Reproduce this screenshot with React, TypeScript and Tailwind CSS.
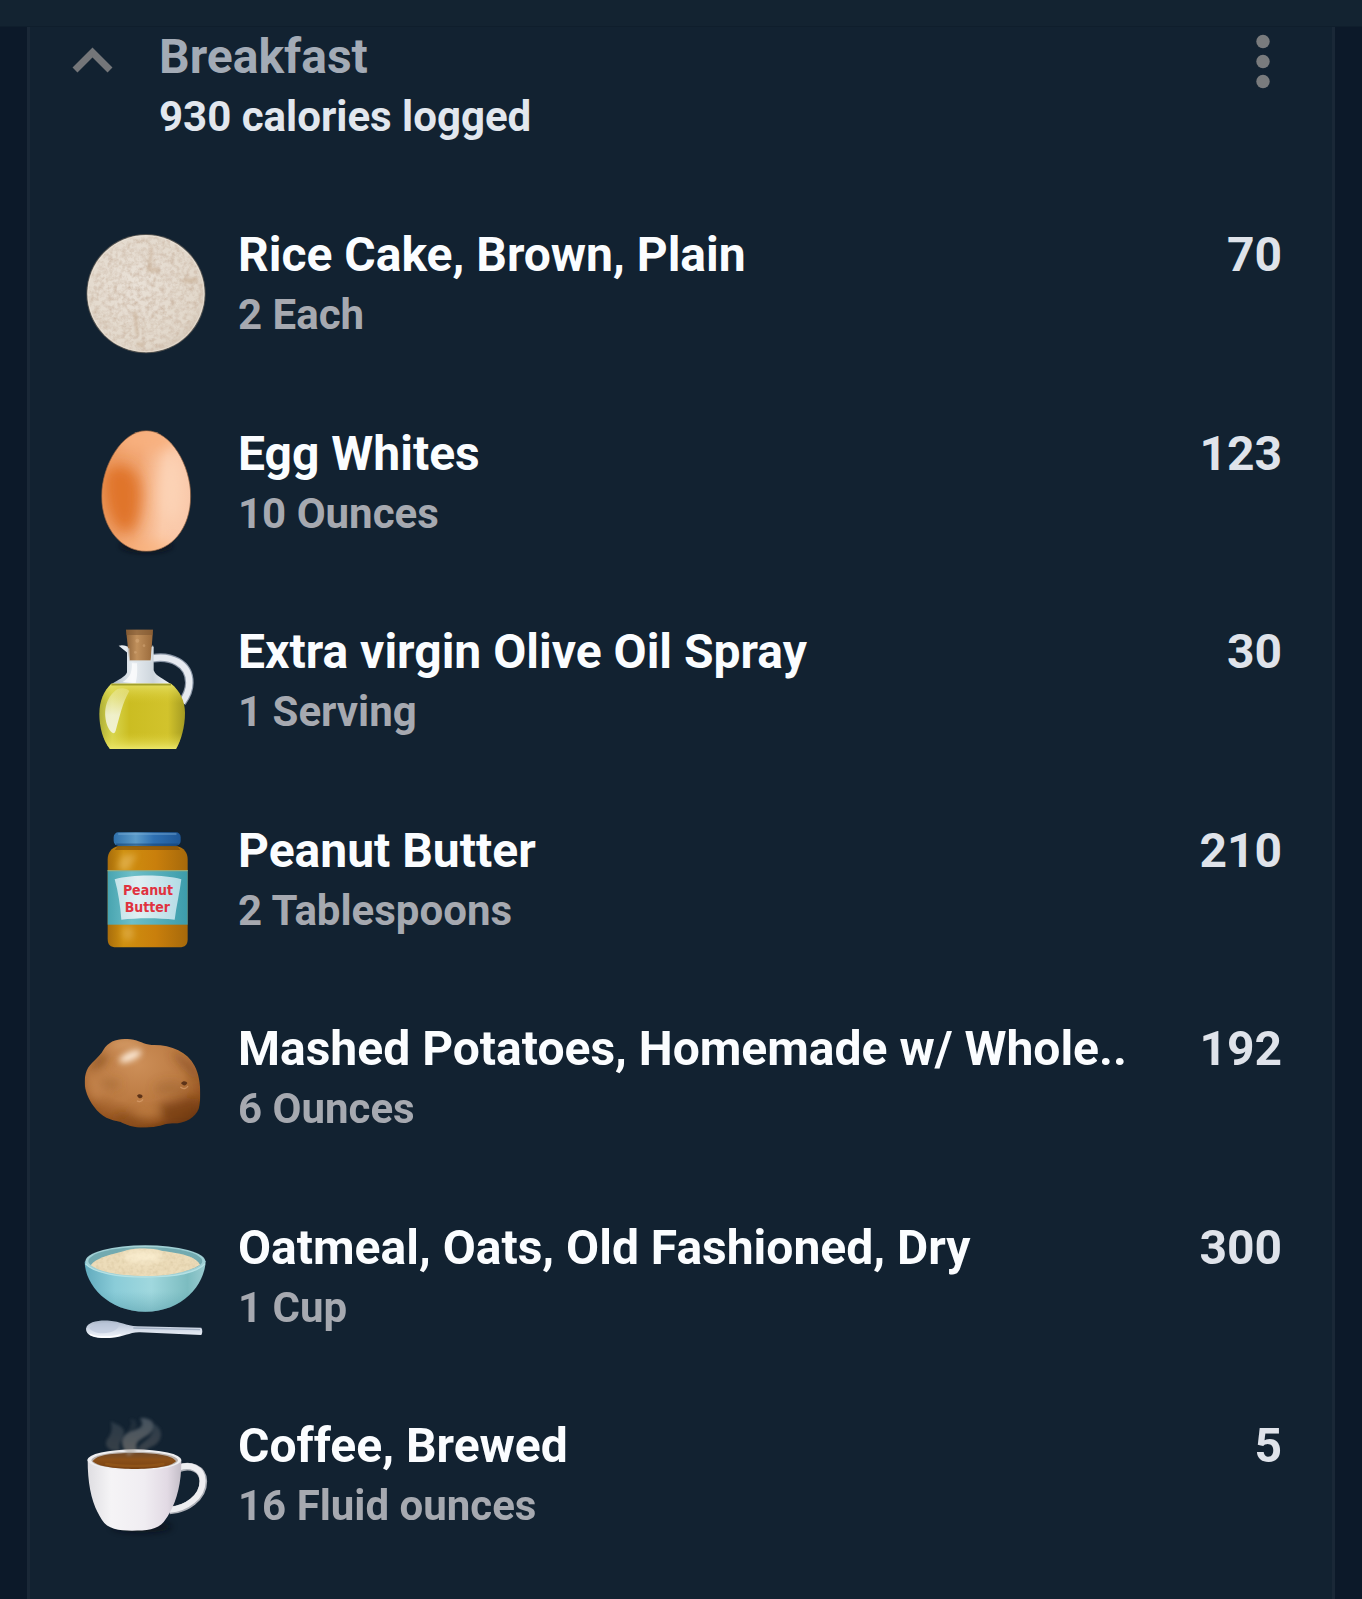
import { useState } from 'react'
import type { ReactNode } from 'react'

type Food = {
  name: string
  serving: string
  calories: number
  icon: ReactNode
}

function RiceCakeIcon() {
  return (
    <svg viewBox="0 -33 450 450" className="size-[150px] shrink-0" aria-hidden="true">
      <defs>
        <filter id="rice-grain" x="0" y="0" width="1" height="1">
          <feTurbulence type="fractalNoise" baseFrequency="0.07" numOctaves="4" seed="4" result="noise" />
          <feColorMatrix
            in="noise"
            type="matrix"
            values="0 0 0 0 0.62  0 0 0 0 0.5  0 0 0 0 0.4  1.6 1.2 0 0 -1.15"
            result="grain"
          />
          <feComposite in="grain" in2="SourceGraphic" operator="in" result="speckle" />
          <feMerge>
            <feMergeNode in="SourceGraphic" />
            <feMergeNode in="speckle" />
          </feMerge>
        </filter>
        <radialGradient id="rice-base" cx="0.4" cy="0.4" r="0.65">
          <stop offset="0" stopColor="#e9e1d7" />
          <stop offset="0.85" stopColor="#e2d8cb" />
          <stop offset="1" stopColor="#d6cabb" />
        </radialGradient>
        <filter id="rice-soft" x="-1" y="-1" width="3" height="3">
          <feGaussianBlur stdDeviation="5" />
        </filter>
      </defs>
      <circle cx="228" cy="221" r="179" fill="#6b655d" opacity="0.7" />
      <circle cx="228" cy="221" r="176" fill="url(#rice-base)" filter="url(#rice-grain)" />
      <circle cx="228" cy="221" r="174" fill="none" stroke="#efe9e0" strokeWidth="3" opacity="0.5" />
      <g fill="none" stroke="#bd9f80" strokeLinecap="round" opacity="0.5" filter="url(#rice-soft)">
        <path d="M245 80l-6 60" strokeWidth="7" />
        <path d="M235 148l25 2M345 182l30 -2" strokeWidth="13" />
        <path d="M195 280l6 60M205 370l12 6" strokeWidth="9" />
      </g>
    </svg>
  )
}

function EggIcon() {
  return (
    <svg viewBox="0 -22 450 450" className="size-[150px] shrink-0" aria-hidden="true">
      <defs>
        <linearGradient id="egg-base" x1="0" x2="1" y1="0.4" y2="0.5">
          <stop offset="0" stopColor="#ec9a60" />
          <stop offset="0.4" stopColor="#f1a673" />
          <stop offset="0.7" stopColor="#fbcaa9" />
          <stop offset="1" stopColor="#f9c8aa" />
        </linearGradient>
        <clipPath id="egg-clip">
          <path d="M229 46C302 46 362 150 362 242C362 340 303 408 229 408C155 408 95 340 95 242C95 150 156 46 229 46Z" />
        </clipPath>
        <filter id="egg-soft" x="-1" y="-1" width="3" height="3">
          <feGaussianBlur stdDeviation="20" />
        </filter>
        <filter id="egg-shadow" x="-1" y="-1" width="3" height="3">
          <feGaussianBlur stdDeviation="7" />
        </filter>
      </defs>
      <ellipse cx="229" cy="392" rx="80" ry="22" fill="#080f18" opacity="0.6" filter="url(#egg-shadow)" />
      <g clipPath="url(#egg-clip)">
        <rect x="90" y="40" width="280" height="375" fill="url(#egg-base)" />
        <ellipse cx="235" cy="70" rx="100" ry="36" fill="#f8b07f" filter="url(#egg-soft)" />
        <path d="M105 170C140 130 205 140 212 225C214 300 196 350 165 352C115 340 90 225 105 170Z" fill="#e0752c" filter="url(#egg-soft)" />
        <ellipse cx="305" cy="220" rx="32" ry="100" fill="#fcd3b6" filter="url(#egg-soft)" />
        <ellipse cx="230" cy="402" rx="90" ry="20" fill="#f9b27d" filter="url(#egg-soft)" />
      </g>
      <path
        d="M229 46C302 46 362 150 362 242C362 340 303 408 229 408C155 408 95 340 95 242C95 150 156 46 229 46Z"
        fill="none"
        stroke="#8c5e3e"
        strokeWidth="3"
        opacity="0.7"
      />
    </svg>
  )
}

function OilIcon() {
  return (
    <svg viewBox="0 -27 450 450" className="size-[150px] shrink-0" aria-hidden="true">
      <defs>
        <linearGradient id="oil-glass" x1="0" x2="1">
          <stop offset="0" stopColor="#aab8c4" />
          <stop offset="0.35" stopColor="#e9eef2" />
          <stop offset="0.7" stopColor="#cdd5dc" />
          <stop offset="1" stopColor="#f2f5f7" />
        </linearGradient>
        <linearGradient id="oil-liquid" x1="0" x2="1">
          <stop offset="0" stopColor="#aeae35" />
          <stop offset="0.15" stopColor="#d8d64f" />
          <stop offset="0.35" stopColor="#cbbd22" />
          <stop offset="0.8" stopColor="#d2c32c" />
          <stop offset="1" stopColor="#a49b22" />
        </linearGradient>
        <linearGradient id="oil-depth" x1="0" x2="0" y1="0" y2="1">
          <stop offset="0" stopColor="#e9e670" stopOpacity="0.8" />
          <stop offset="0.3" stopColor="#d9cc34" stopOpacity="0" />
          <stop offset="0.75" stopColor="#d9cc34" stopOpacity="0" />
          <stop offset="1" stopColor="#ece86c" stopOpacity="0.95" />
        </linearGradient>
        <linearGradient id="oil-cork" x1="0" x2="1">
          <stop offset="0" stopColor="#8d6238" />
          <stop offset="0.4" stopColor="#c0905c" />
          <stop offset="1" stopColor="#99693a" />
        </linearGradient>
        <linearGradient id="oil-shine" x1="0" x2="0" y1="0" y2="1">
          <stop offset="0" stopColor="#f4f3c4" stopOpacity="0.3" />
          <stop offset="0.6" stopColor="#f4f5e0" stopOpacity="0.85" />
          <stop offset="1" stopColor="#f4f5e0" stopOpacity="0.9" />
        </linearGradient>
      </defs>
      <path d="M248 130C300 121 358 143 358 203C358 228 350 243 336 262" fill="none" stroke="#8995a5" strokeWidth="26" />
      <path d="M248 130C300 121 358 143 358 203C358 228 350 243 336 262" fill="none" stroke="#e6eaf0" strokeWidth="19" />
      <path d="M146 92C158 88 170 92 180 99L180 120C172 112 156 101 146 92Z" fill="#e7ecf0" />
      <path
        d="M171 95L171 172C166 186 146 193 124 208L303 208C280 190 257 184 251 166L251 95Z"
        fill="url(#oil-glass)"
      />
      <path d="M186 145C187 180 174 191 158 201L197 204C203 183 202 160 201 145Z" fill="#ffffff" opacity="0.7" />
      <path
        d="M124 206L303 206C330 228 345 258 345 294C345 336 333 376 318 402L120 402C98 374 88 336 88 296C88 258 101 228 124 206Z"
        fill="url(#oil-liquid)"
      />
      <path
        d="M124 206L303 206C330 228 345 258 345 294C345 336 333 376 318 402L120 402C98 374 88 336 88 296C88 258 101 228 124 206Z"
        fill="url(#oil-depth)"
      />
      <path d="M124 209L303 209" stroke="#a2a02c" strokeWidth="5" />
      <path d="M142 222C154 218 170 218 178 228C158 262 149 305 137 347C132 362 121 352 114 337C98 296 104 249 142 222Z" fill="url(#oil-shine)" />
      <path d="M168 44L249 44L242 137L178 137Z" fill="url(#oil-cork)" />
      <path d="M168 44H249L248 60H169Z" fill="#7a5430" opacity="0.55" />
      <g fill="#e0b485" opacity="0.4">
        <circle cx="202" cy="77" r="6" />
        <circle cx="222" cy="92" r="4" />
        <circle cx="196" cy="112" r="4" />
      </g>
      <path d="M176 100L178 138H244L248 92" fill="none" stroke="#d8dfe4" strokeWidth="4" opacity="0.7" />
    </svg>
  )
}

function PeanutButterIcon() {
  return (
    <svg viewBox="0 -30 450 450" className="size-[150px] shrink-0" aria-hidden="true">
      <defs>
        <linearGradient id="pb-jar" x1="0" x2="1">
          <stop offset="0" stopColor="#a86d0c" />
          <stop offset="0.2" stopColor="#cf900f" />
          <stop offset="0.6" stopColor="#c97f0c" />
          <stop offset="1" stopColor="#a6690b" />
        </linearGradient>
        <linearGradient id="pb-lid" x1="0" x2="1">
          <stop offset="0" stopColor="#2f70aa" />
          <stop offset="0.33" stopColor="#5b9bc9" />
          <stop offset="0.6" stopColor="#2e70b2" />
          <stop offset="1" stopColor="#1e5797" />
        </linearGradient>
        <linearGradient id="pb-band" x1="0" x2="1">
          <stop offset="0" stopColor="#48a4b0" />
          <stop offset="0.3" stopColor="#6dbfc8" />
          <stop offset="1" stopColor="#3c9cab" />
        </linearGradient>
        <linearGradient id="pb-paper" x1="0" x2="1">
          <stop offset="0" stopColor="#c2e2e8" />
          <stop offset="0.35" stopColor="#e0eff3" />
          <stop offset="1" stopColor="#b3dbe5" />
        </linearGradient>
        <filter id="pb-soft" x="-1" y="-1" width="3" height="3">
          <feGaussianBlur stdDeviation="10" />
        </filter>
      </defs>
      <path
        d="M143 94H322C342 99 353 113 353 134V372C353 389 345 397 328 397H139C121 397 113 389 113 372V134C113 113 124 99 143 94Z"
        fill="url(#pb-jar)"
      />
      <path d="M143 94H322L331 105H134Z" fill="#76490b" opacity="0.6" />
      <path d="M160 119L202 119C190 136 182 150 178 165H145C145 143 150 129 160 119Z" fill="#edc574" opacity="0.5" filter="url(#pb-soft)" />
      <ellipse cx="174" cy="355" rx="18" ry="22" fill="#edc574" opacity="0.4" filter="url(#pb-soft)" />
      <rect x="113" y="165" width="240" height="164" fill="url(#pb-band)" />
      <path d="M113 167H353" stroke="#9aab7a" strokeWidth="4" />
      <path d="M134 193C190 178 278 178 334 193C329 233 319 274 314 314C264 308 202 308 154 314C151 273 145 232 134 193Z" fill="url(#pb-paper)" />
      <g
        fill="#e0323f"
        fontFamily="'DejaVu Sans Condensed', 'DejaVu Sans', sans-serif"
        fontWeight="700"
        fontSize="42"
        textAnchor="middle"
      >
        <text x="234" y="240">Peanut</text>
        <text x="232" y="291">Butter</text>
      </g>
      <rect x="131" y="52" width="201" height="40" rx="14" fill="url(#pb-lid)" />
      <path d="M146 57H318" stroke="#84b5db" strokeWidth="4" opacity="0.5" strokeLinecap="round" />
      <path d="M140 88H324" stroke="#123c6b" strokeWidth="5" opacity="0.5" strokeLinecap="round" />
    </svg>
  )
}

function PotatoIcon() {
  return (
    <svg viewBox="0 -36 450 450" className="size-[150px] shrink-0" aria-hidden="true">
      <defs>
        <radialGradient id="potato-base" cx="0.45" cy="0.3" r="0.72">
          <stop offset="0" stopColor="#cd8f58" />
          <stop offset="0.55" stopColor="#bb7a42" />
          <stop offset="0.85" stopColor="#94531f" />
          <stop offset="1" stopColor="#66330d" />
        </radialGradient>
        <clipPath id="potato-clip">
          <path d="M100 105C116 78 145 69 180 73C210 77 220 88 245 90C300 88 352 109 374 153C394 190 394 252 386 281C376 306 346 326 307 325C283 325 276 335 238 337C196 340 174 331 151 320C121 315 96 309 71 274C48 241 36 205 50 167C60 143 87 130 100 105Z" />
        </clipPath>
        <filter id="potato-soft" x="-1" y="-1" width="3" height="3">
          <feGaussianBlur stdDeviation="14" />
        </filter>
        <filter id="potato-shine" x="-1" y="-1" width="3" height="3">
          <feGaussianBlur stdDeviation="9" />
        </filter>
      </defs>
      <g clipPath="url(#potato-clip)">
        <rect x="35" y="60" width="370" height="290" fill="url(#potato-base)" />
        <g filter="url(#potato-soft)">
          <path d="M88 116L118 128L88 158L52 172Z" fill="#87501f" opacity="0.8" />
          <ellipse cx="165" cy="88" rx="50" ry="12" fill="#dfac7a" opacity="0.7" />
          <path d="M266 268C315 270 348 245 386 250L380 330H285Z" fill="#743c0f" opacity="0.7" />
          <path d="M142 291C177 309 224 305 242 323L196 347L130 330Z" fill="#8a4c17" opacity="0.8" />
          <ellipse cx="231" cy="289" rx="42" ry="18" fill="#c78647" opacity="0.6" />
          <ellipse cx="80" cy="218" rx="26" ry="36" fill="#c4844e" opacity="0.8" />
          <ellipse cx="120" cy="207" rx="32" ry="10" fill="#96612f" opacity="0.6" />
          <ellipse cx="300" cy="220" rx="46" ry="20" fill="#9b6130" opacity="0.5" />
          <path d="M304 112C343 119 374 153 385 203L354 170Z" fill="#75401a" opacity="0.7" />
        </g>
        <ellipse cx="181" cy="124" rx="36" ry="12" transform="rotate(-24 181 124)" fill="#fff0df" filter="url(#potato-shine)" />
      </g>
      <g fill="#5d3318">
        <path d="M201 242C207 234 216 238 218 243C215 253 206 251 201 242Z" />
        <path d="M333 205C340 195 349 199 352 204C347 215 339 212 333 205Z" />
      </g>
      <path d="M201 257C208 263 215 258 219 253M331 216C341 225 350 220 354 213" fill="none" stroke="#dfa777" strokeWidth="4" opacity="0.6" />
    </svg>
  )
}

function OatmealIcon() {
  return (
    <svg viewBox="0 -39 450 450" className="size-[150px] shrink-0" aria-hidden="true">
      <defs>
        <linearGradient id="oat-bowl" x1="0" x2="1">
          <stop offset="0" stopColor="#61aabd" />
          <stop offset="0.25" stopColor="#8accd8" />
          <stop offset="0.55" stopColor="#a0d8de" />
          <stop offset="0.85" stopColor="#7cbcc0" />
          <stop offset="1" stopColor="#9acbd0" />
        </linearGradient>
        <linearGradient id="oat-bottom" x1="0" x2="0" y1="0" y2="1">
          <stop offset="0.6" stopColor="#4c99a6" stopOpacity="0" />
          <stop offset="1" stopColor="#438b9a" stopOpacity="0.4" />
        </linearGradient>
        <linearGradient id="oat-spoon" x1="0" x2="0" y1="0" y2="1">
          <stop offset="0" stopColor="#a9b6c8" />
          <stop offset="0.45" stopColor="#cfd8e6" />
          <stop offset="1" stopColor="#f2f6fb" />
        </linearGradient>
        <filter id="oat-grain" x="0" y="0" width="1" height="1">
          <feTurbulence type="fractalNoise" baseFrequency="0.09" numOctaves="2" seed="8" />
          <feColorMatrix type="matrix" values="0 0 0 0 0.72  0 0 0 0 0.6  0 0 0 0 0.38  1.5 1 0 0 -1.05" result="grain" />
          <feComposite in="grain" in2="SourceGraphic" operator="in" result="speckle" />
          <feMerge>
            <feMergeNode in="SourceGraphic" />
            <feMergeNode in="speckle" />
          </feMerge>
        </filter>
        <filter id="oat-soft" x="-1" y="-1" width="3" height="3">
          <feGaussianBlur stdDeviation="9" />
        </filter>
      </defs>
      <path d="M44 140C45 209 114 290 226 290C337 290 405 209 407 137Z" fill="url(#oat-bowl)" />
      <path d="M44 140C45 209 114 290 226 290C337 290 405 209 407 137Z" fill="url(#oat-bottom)" />
      <ellipse cx="226" cy="139" rx="180" ry="48" fill="#a0d0d5" />
      <ellipse cx="226" cy="138" rx="171" ry="42" fill="#72aab0" />
      <path
        d="M62 151C81 124 136 117 174 105C205 99 247 99 277 108C323 114 375 121 390 149C350 174 287 183 226 183C157 183 92 173 62 151Z"
        fill="#ecdcb9"
        filter="url(#oat-grain)"
      />
      <ellipse cx="218" cy="125" rx="60" ry="18" fill="#fff4d8" opacity="0.7" filter="url(#oat-soft)" />
      <path d="M46 146C70 174 145 186 226 186C308 186 381 174 405 146" fill="none" stroke="#b5e1e4" strokeWidth="4" />
      <path
        d="M48 341C52 320 85 315 119 317C151 319 167 332 202 334L394 338C398 345 398 353 394 360L210 352C177 351 164 367 119 369C79 371 47 363 48 341Z"
        fill="url(#oat-spoon)"
      />
      <path d="M58 339C73 324 108 320 139 325C153 330 145 345 121 352C92 359 66 352 58 339Z" fill="#b9c5d8" opacity="0.6" />
      <path d="M190 339L390 344" stroke="#8fa0b6" strokeWidth="4" opacity="0.7" />
      <path d="M60 358C83 369 129 368 152 359" fill="none" stroke="#ffffff" strokeWidth="4" />
    </svg>
  )
}

function CoffeeIcon() {
  return (
    <svg viewBox="0 0 450 450" className="size-[150px] shrink-0" aria-hidden="true">
      <defs>
        <linearGradient id="cup-body" x1="0" x2="1">
          <stop offset="0" stopColor="#dfdee2" />
          <stop offset="0.25" stopColor="#f5f4f6" />
          <stop offset="0.6" stopColor="#f0edf2" />
          <stop offset="0.85" stopColor="#e2dae4" />
          <stop offset="1" stopColor="#c3bdc7" />
        </linearGradient>
        <linearGradient id="cup-coffee" x1="0" x2="0" y1="0" y2="1">
          <stop offset="0" stopColor="#704a2a" />
          <stop offset="0.4" stopColor="#8c5119" />
          <stop offset="1" stopColor="#784112" />
        </linearGradient>
        <linearGradient id="cup-steam" x1="0" x2="0" y1="0" y2="1">
          <stop offset="0" stopColor="#75818b" stopOpacity="0.5" />
          <stop offset="1" stopColor="#a89a8d" stopOpacity="0.5" />
        </linearGradient>
        <filter id="cup-shadow" x="-1" y="-1" width="3" height="3">
          <feGaussianBlur stdDeviation="9" />
        </filter>
        <filter id="cup-vapor" x="-1" y="-1" width="3" height="3">
          <feGaussianBlur stdDeviation="4" />
        </filter>
      </defs>
      <ellipse cx="215" cy="380" rx="90" ry="18" fill="#070e17" opacity="0.65" filter="url(#cup-shadow)" />
      <path d="M326 205C360 192 399 204 400 244C400 294 348 329 299 331" fill="none" stroke="#aeb1b8" strokeWidth="23" />
      <path d="M326 203C360 190 397 204 398 242C398 292 348 326 299 329" fill="none" stroke="#eeeef1" strokeWidth="18" />
      <path
        d="M53 179C53 258 66 314 96 360C112 387 147 392 186 392C229 392 263 389 281 366C316 321 335 258 334 179Z"
        fill="url(#cup-body)"
      />
      <ellipse cx="193" cy="180" rx="141" ry="32" fill="#efeff1" />
      <ellipse cx="194" cy="181" rx="130" ry="26" fill="#b9b0aa" />
      <path d="M68 184C78 165 126 159 194 159C261 159 307 166 318 184C300 202 245 207 194 207C144 207 88 202 68 184Z" fill="url(#cup-coffee)" />
      <path d="M109 192C150 200 240 200 280 192" fill="none" stroke="#a5661f" strokeWidth="8" opacity="0.4" strokeLinecap="round" />
      <g fill="url(#cup-steam)" filter="url(#cup-vapor)">
        <path d="M122 63C128 89 125 102 112 117C103 133 110 144 126 151L153 155C137 127 170 110 160 88C151 73 137 75 122 63Z" opacity="0.5" />
        <path d="M210 54C256 52 263 84 234 105C208 121 192 126 202 151L175 168C144 127 155 108 181 94C215 85 224 78 210 54Z" />
        <path d="M253 72C279 87 280 117 255 135C235 144 226 150 221 158L202 150C212 119 249 125 253 72Z" opacity="0.55" />
        <path d="M179 58C198 53 202 72 197 84L174 94C184 79 188 69 179 58Z" opacity="0.25" />
      </g>
    </svg>
  )
}

const foods: Food[] = [
  { name: 'Rice Cake, Brown, Plain', serving: '2 Each', calories: 70, icon: <RiceCakeIcon /> },
  { name: 'Egg Whites', serving: '10 Ounces', calories: 123, icon: <EggIcon /> },
  { name: 'Extra virgin Olive Oil Spray', serving: '1 Serving', calories: 30, icon: <OilIcon /> },
  { name: 'Peanut Butter', serving: '2 Tablespoons', calories: 210, icon: <PeanutButterIcon /> },
  { name: 'Mashed Potatoes, Homemade w/ Whole..', serving: '6 Ounces', calories: 192, icon: <PotatoIcon /> },
  { name: 'Oatmeal, Oats, Old Fashioned, Dry', serving: '1 Cup', calories: 300, icon: <OatmealIcon /> },
  { name: 'Coffee, Brewed', serving: '16 Fluid ounces', calories: 5, icon: <CoffeeIcon /> },
]

function FoodRow({ food }: { food: Food }) {
  return (
    <li className="flex items-start">
      {food.icon}
      <div className="ml-[18px] min-w-0 flex-1 pt-4">
        <h2 className="truncate text-[48px] leading-[60px] font-bold text-[#fbfdff]">{food.name}</h2>
        <p className="text-[42px] leading-[60px] font-bold text-[#a6a9b0]">{food.serving}</p>
      </div>
      <p className="ml-4 pt-4 text-[48px] leading-[60px] font-bold text-[#dfe3ea]">{food.calories}</p>
    </li>
  )
}

export default function App() {
  const [open, setOpen] = useState(true)
  const total = foods.reduce((sum, f) => sum + f.calories, 0)

  return (
    <div className="flex min-h-screen flex-col bg-[#0c1929] font-['Roboto',sans-serif]">
      <div className="h-[27px] border-b border-[#0f1e2c] bg-[#132331]" />
      <main className="mx-[27px] flex flex-1 flex-col border-x-3 border-[#1a2837] bg-[#122231]">
        <header className="flex h-[182px] items-start pr-[54px] pl-[40px]">
          <button type="button" aria-label="Toggle Breakfast" aria-expanded={open} onClick={() => setOpen(!open)}>
            <svg viewBox="0 0 46 68" className="h-[68px] w-[46px]" fill="none" stroke="#747679" strokeWidth="7">
              <path d="M5 43L22.500 25.500L40 43" />
            </svg>
          </button>
          <div className="ml-[43px] flex-1">
            <h1 className="text-[48px] leading-[60px] font-bold text-[#a3abb6]">Breakfast</h1>
            <p className="text-[42px] leading-[60px] font-bold text-[#e2e7ee]">{total} calories logged</p>
          </div>
          <button type="button" aria-label="Breakfast options">
            <svg viewBox="0 0 30 68" className="h-[68px] w-[30px]" fill="#797b7d">
              <circle cx="15" cy="14.500" r="6.700" />
              <circle cx="15" cy="34.500" r="6.700" />
              <circle cx="15" cy="54.500" r="6.700" />
            </svg>
          </button>
        </header>
        {open && (
          <ul className="grid flex-1 auto-rows-fr pr-[50px] pl-[40px]">
            {foods.map((food) => (
              <FoodRow key={food.name} food={food} />
            ))}
          </ul>
        )}
      </main>
    </div>
  )
}
